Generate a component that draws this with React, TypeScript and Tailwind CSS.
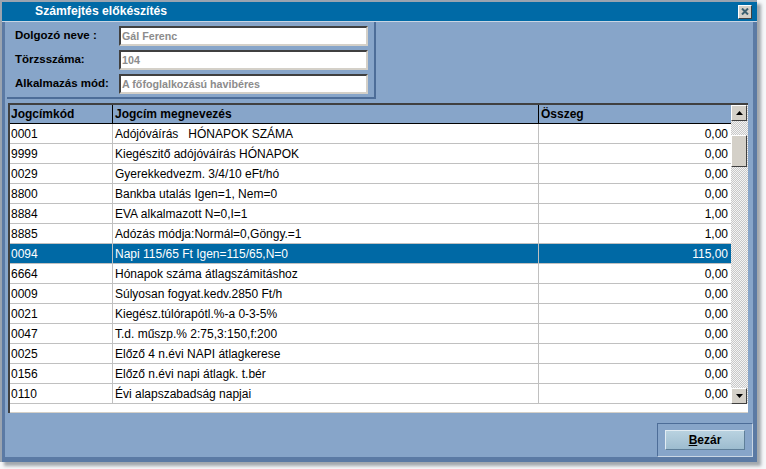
import React from "react";

const rows: [string, string, string][] = [
  ["0001", "Adójóváírás   HÓNAPOK SZÁMA", "0,00"],
  ["9999", "Kiegészitő adójóváírás HÓNAPOK", "0,00"],
  ["0029", "Gyerekkedvezm. 3/4/10 eFt/hó", "0,00"],
  ["8800", "Bankba utalás Igen=1, Nem=0", "0,00"],
  ["8884", "EVA alkalmazott N=0,I=1", "1,00"],
  ["8885", "Adózás módja:Normál=0,Göngy.=1", "1,00"],
  ["0094", "Napi 115/65 Ft Igen=115/65,N=0", "115,00"],
  ["6664", "Hónapok száma átlagszámitáshoz", "0,00"],
  ["0009", "Súlyosan fogyat.kedv.2850 Ft/h", "0,00"],
  ["0021", "Kiegész.túlórapótl.%-a 0-3-5%", "0,00"],
  ["0047", "T.d. műszp.% 2:75,3:150,f:200", "0,00"],
  ["0025", "Előző 4 n.évi NAPI átlagkerese", "0,00"],
  ["0156", "Előző n.évi napi átlagk. t.bér", "0,00"],
  ["0110", "Évi alapszabadság napjai", "0,00"],
];

const SELECTED = "0094";

const fields: [string, string][] = [
  ["Dolgozó neve :", "Gál Ferenc"],
  ["Törzsszáma:", "104"],
  ["Alkalmazás mód:", "A főfoglalkozású havibéres"],
];

const checker =
  "repeating-conic-gradient(#c8c8c8 0% 25%, #f4f4f4 0% 50%) 0 0 / 2px 2px";

function Arrow({ up }: { up: boolean }) {
  return (
    <div className="flex h-[16px] w-[16px] items-center justify-center border border-t-white border-l-white border-r-[#404040] border-b-[#404040] bg-[#d4d0c8]">
      <svg width="7" height="4" viewBox="0 0 7 4">
        <path d={up ? "M0 4 L3.5 0 L7 4 Z" : "M0 0 L3.5 4 L7 0 Z"} fill="#000" />
      </svg>
    </div>
  );
}

export default function App() {
  return (
    <div
      className="h-[469px] w-[766px] bg-[#f6f7f9] text-[12px] text-black"
      style={{ fontFamily: '"Liberation Sans", Arial, sans-serif' }}
    >
      <div className="flex h-[462px] w-[757px] flex-col border-l-[2px] border-t-[2px] border-[#9aa4b0] bg-[#5b7aa4] shadow-[4px_4px_3px_rgba(60,70,80,0.45)]">
        {/* title bar */}
        <div className="flex h-[19px] shrink-0 items-center justify-between bg-[#006aa6] pl-[33px] pr-[5px]">
          <span className="text-[12.2px] font-bold text-white">
            Számfejtés előkészítés
          </span>
          <div className="flex h-[14px] w-[14px] items-center justify-center border border-t-white border-l-white border-r-[#404040] border-b-[#404040] bg-[#d4d0c8]">
            <svg width="8" height="7" viewBox="0 0 8 7">
              <path d="M1 0.5 L7 6.5 M7 0.5 L1 6.5" stroke="#3c6070" strokeWidth="2" />
            </svg>
          </div>
        </div>
        <div className="h-px shrink-0 bg-[#c9d6e4]" />

        {/* body */}
        <div className="mb-[5px] ml-[3px] mr-[4px] flex flex-1 flex-col bg-[#87a5c9]">
          {/* info panel */}
          <div className="ml-[2px] flex h-[77px] w-[369px] flex-col gap-[4px] border-b-2 border-r-2 border-[#4d6d98] pl-[8px] pr-[6px] pt-[4px]">
            {fields.map(([label, value]) => (
              <div key={label} className="flex items-center">
                <span className="w-[104px] text-[11.5px] font-bold">{label}</span>
                <div className="flex h-[20px] flex-1 items-center border-2 border-t-[#404040] border-l-[#404040] border-r-[#d4d0c8] border-b-[#d4d0c8] bg-white pl-[1px] text-[10.7px] font-bold text-[#8c8c8c]">
                  {value}
                </div>
              </div>
            ))}
          </div>

          {/* table */}
          <div className="ml-[3px] mr-[5px] mt-[4px] flex h-[310px] flex-col border-l-2 border-t-2 border-[#404040] bg-white">
            <div className="flex flex-1">
              <div className="flex flex-1 flex-col">
                <div className="flex h-[19px] shrink-0 bg-[#87a5c9] font-bold">
                  <div className="flex w-[103px] items-center border-b border-r border-black pl-[1px]">Jogcímkód</div>
                  <div className="flex w-[426px] items-center border-b border-r border-black pl-[2px]">Jogcím megnevezés</div>
                  <div className="flex flex-1 items-center border-b border-black pl-[2px]">Összeg</div>
                </div>
                {rows.map(([code, name, amount]) => {
                  const sel = code === SELECTED;
                  return (
                    <div
                      key={code}
                      className={
                        sel
                          ? "flex h-[20px] shrink-0 bg-[#0069a5] text-white"
                          : "flex h-[20px] shrink-0"
                      }
                    >
                      <div className="flex w-[103px] items-center border-b border-r border-[#c0c0c0] pl-[1px]">{code}</div>
                      <div className="flex w-[426px] items-center whitespace-pre border-b border-r border-[#c0c0c0] pl-[2px]">{name}</div>
                      <div className="flex flex-1 items-center justify-end border-b border-[#c0c0c0] pr-[3px]">{amount}</div>
                    </div>
                  );
                })}
              </div>
              {/* scrollbar */}
              <div className="flex w-[17px] flex-col" style={{ background: checker }}>
                <Arrow up />
                <div className="mt-[14px] h-[32px] w-[16px] border border-t-white border-l-white border-r-[#404040] border-b-[#404040] bg-[#d4d0c8]" />
                <div className="flex-1" />
                <Arrow up={false} />
              </div>
            </div>
            <div className="h-[9px] shrink-0 border-b border-[#d4d0c8]" />
          </div>

          {/* footer */}
          <div className="flex flex-1 items-end justify-end">
            <div className="flex h-[34px] w-[96px] items-center justify-center border border-t-[#4d6d98] border-l-[#4d6d98] border-r-[#c9d6e4] border-b-[#c9d6e4]">
              <button className="h-[20px] w-[80px] border border-t-[#e2ecf3] border-l-[#e2ecf3] border-r-[#5f7f99] border-b-[#5f7f99] bg-gradient-to-b from-[#b9d2e0] to-[#9dbccf] text-[12px] font-bold">
                <span className="underline">B</span>ezár
              </button>
            </div>
          </div>
        </div>
      </div>
    </div>
  );
}
